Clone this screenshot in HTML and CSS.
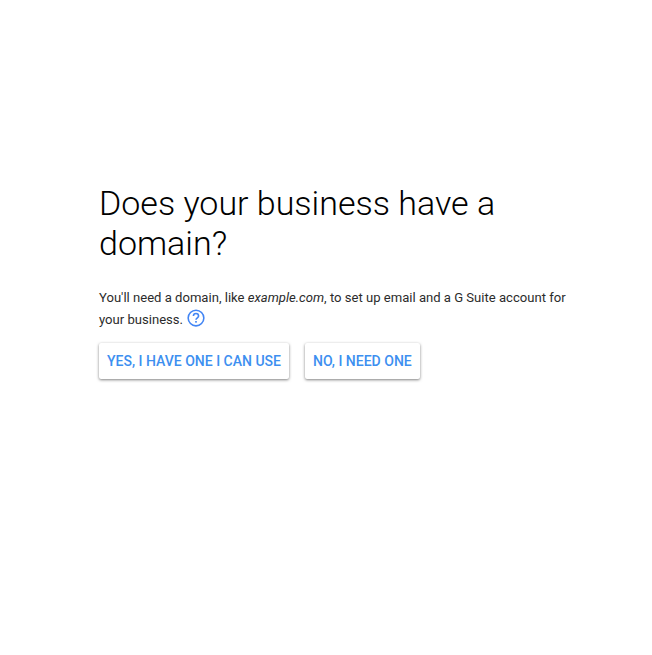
FILE: index.html
```html
<!DOCTYPE html>
<html lang="en">
<head>
  <meta charset="UTF-8">
  <title>Does your business have a domain?</title>
  <link rel="stylesheet" href="styles.css">
</head>
<body>
  <main class="content">
    <h1>Does your business have a domain?</h1>
    <p class="desc">You'll need a domain, like <em>example.com</em>, to set up email and a G Suite account for your business.
      <svg class="help" width="20" height="20" viewBox="0 0 24 24"><circle cx="12" cy="12" r="9.4" fill="none" stroke="#4285f4" stroke-width="1.9"/><path d="M8.9 9.6a3.1 3.1 0 0 1 6.2 0c0 2.1-3.1 2.2-3.1 4.6" fill="none" stroke="#4285f4" stroke-width="1.9"/><rect x="11" y="15.6" width="2" height="2" fill="#4285f4"/></svg>
    </p>
    <div class="actions">
      <button class="btn">YES, I HAVE ONE I CAN USE</button>
      <button class="btn">NO, I NEED ONE</button>
    </div>
  </main>
</body>
</html>
```

FILE: styles.css
```css
html, body { height: 100%; }
body { margin: 0; background: #fff; font-family: Roboto, sans-serif; }
.content { box-sizing: border-box; width: 579px; min-height: 100%; padding: 183px 0 0 99px; }
h1 { margin: 0; font-size: 34px; font-weight: 300; line-height: 40px; color: #000; }
.desc { margin: 24px 0 0; font-size: 13.08px; line-height: 22px; color: #2b2b2b; }
.desc em { font-style: italic; }
.help { vertical-align: 0; margin: -4px 0 -4px 0; }
.actions { display: flex; gap: 16px; margin-top: 12px; }
.btn { height: 36px; padding: 0 8px; border: 0; border-radius: 2px; background: #fff; color: #3d8ff0; font: 500 14px Roboto, sans-serif; box-shadow: 0 1px 3px rgba(0,0,0,.5); }
```
